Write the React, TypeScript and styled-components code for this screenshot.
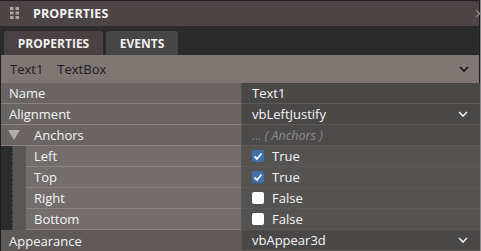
import React from "react";
import styled, { createGlobalStyle, css } from "styled-components";

const Global = createGlobalStyle`
  html, body { margin: 0; padding: 0; background: #1f1f1f; }
  body { font-family: "Open Sans", "Noto Sans", sans-serif; }
`;

const Panel = styled.div`
  width: 480px;
  height: 251px;
  background: #1f1f1f;
  border-right: 1px solid #8a8a8a;
  display: flex;
  flex-direction: column;
  overflow: hidden;
`;

const TitleBar = styled.div`
  margin-top: 1px;
  height: 25px;
  margin-right: 1px;
  background: #4d4545;
  display: flex;
  align-items: center;
  padding-left: 10px;
  gap: 13px;
  position: relative;
`;

const TitleText = styled.div`
  color: #f2f2f2;
  font-weight: 700;
  font-size: 12.5px;
  letter-spacing: 0.1px;
`;

const CloseIcon = styled.svg`
  position: absolute;
  right: -5px;
  top: 8px;
`;

const Grip = () => (
  <svg width="10" height="12" viewBox="0 0 10 12">
    {[0, 4.5, 9].map((y) =>
      [0, 5.5].map((x) => (
        <rect key={`${x}-${y}`} x={x} y={y} width="3.5" height="3" fill="#aca3a3" />
      ))
    )}
  </svg>
);

const TabStrip = styled.div`
  height: 30px;
  margin-right: 1px;
  background: #2b2b2b;
  display: flex;
  align-items: flex-end;
  padding-left: 4px;
  gap: 3px;
`;

const Tab = styled.div<{ $active?: boolean }>`
  height: 24px;
  border-radius: 3px 3px 0 0;
  display: flex;
  align-items: center;
  justify-content: center;
  color: #f0f0f0;
  font-weight: 700;
  font-size: 12px;
  background: ${(p) => (p.$active ? "#4a4242" : "#474747")};
  width: ${(p) => (p.$active ? "99px" : "72px")};
`;

const Selector = styled.div`
  height: 28px;
  margin-left: 1px;
  margin-right: 1px;
  background: #7f7774;
  display: flex;
  align-items: center;
  padding: 0 10px 0 9px;
  color: #1d1d1d;
  font-size: 13px;
  gap: 14px;
`;

const Spacer = styled.div`
  flex: 1;
`;

const Grid = styled.div`
  display: flex;
  flex-direction: column;
  margin-left: 1px;
`;

const Row = styled.div`
  display: grid;
  grid-template-columns: 240px 1fr;
  height: 21px;
`;

const NameCell = styled.div<{ $tone?: "base" | "child" | "dark" }>`
  display: flex;
  align-items: center;
  box-sizing: border-box;
  border-bottom: 1px solid #8a8381;
  color: #f4f4f4;
  font-size: 13px;
  padding-left: 8px;
  flex: 1;
  background: ${(p) =>
    p.$tone === "child" ? "#736d6b" : p.$tone === "dark" ? "#5f5a58" : "#6a6462"};
  ${(p) =>
    p.$tone === "dark" &&
    css`
      border-bottom: none;
    `}
`;

const ChildName = styled.div`
  display: flex;
  align-items: stretch;
  box-sizing: border-box;
`;

const Gutter = styled.div`
  width: 11px;
  background: #2c2c2c;
  border-right: 1px dashed #4a4f6e;
`;

const Band = styled.div`
  width: 13px;
  background: #5a5654;
`;

const GroupName = styled(NameCell)`
  padding-left: 7px;
  gap: 14px;
`;

const ValueCell = styled.div<{ $tone?: "base" | "child" | "muted" }>`
  display: flex;
  align-items: center;
  box-sizing: border-box;
  border-bottom: 1px solid #5c5959;
  border-left: 1px solid #5a5656;
  color: #f4f4f4;
  font-size: 13px;
  padding: 0 12px 0 10px;
  gap: 8px;
  background: ${(p) =>
    p.$tone === "child" ? "#555252" : p.$tone === "muted" ? "#4d4a4a" : "#4a4747"};
`;

const Muted = styled.span`
  color: #8d8a8a;
  font-style: italic;
  font-size: 12.5px;
`;

const Box = styled.span<{ $checked?: boolean }>`
  width: 12px;
  height: 12px;
  border-radius: 2px;
  display: inline-flex;
  align-items: center;
  justify-content: center;
  background: ${(p) => (p.$checked ? "#3f70ac" : "#ffffff")};
`;

const Chevron = ({ color = "#f0f0f0" }: { color?: string }) => (
  <svg width="10" height="6" viewBox="0 0 10 6">
    <path d="M1 1 L5 5 L9 1" fill="none" stroke={color} strokeWidth="1.6" />
  </svg>
);

const Check = () => (
  <svg width="10" height="9" viewBox="0 0 10 9">
    <path d="M1.5 4.5 L4 7 L8.5 1.5" fill="none" stroke="#fff" strokeWidth="1.8" />
  </svg>
);

const Triangle = () => (
  <svg width="12" height="10" viewBox="0 0 12 10">
    <path d="M0 0 H12 L6 10 Z" fill="#b3aeac" />
  </svg>
);

const ChildRow = ({ label, checked }: { label: string; checked: boolean }) => (
  <Row>
    <ChildName>
      <Gutter />
      <Band />
      <NameCell $tone="child">{label}</NameCell>
    </ChildName>
    <ValueCell $tone="child">
      <Box $checked={checked}>{checked && <Check />}</Box>
      {checked ? "True" : "False"}
    </ValueCell>
  </Row>
);

export default function App() {
  return (
    <>
      <Global />
      <Panel>
        <TitleBar>
          <Grip />
          <TitleText>PROPERTIES</TitleText>
          <CloseIcon width="9" height="9" viewBox="0 0 9 9">
            <path d="M1 1 L8 8 M8 1 L1 8" stroke="#8a8282" strokeWidth="1.4" />
          </CloseIcon>
        </TitleBar>
        <TabStrip>
          <Tab $active>PROPERTIES</Tab>
          <Tab>EVENTS</Tab>
        </TabStrip>
        <Selector>
          <span>Text1</span>
          <span>TextBox</span>
          <Spacer />
          <Chevron color="#111" />
        </Selector>
        <Grid>
          <Row>
            <NameCell>Name</NameCell>
            <ValueCell>Text1</ValueCell>
          </Row>
          <Row>
            <NameCell>Alignment</NameCell>
            <ValueCell>
              vbLeftJustify
              <Spacer />
              <Chevron />
            </ValueCell>
          </Row>
          <Row>
            <GroupName>
              <Triangle />
              <span>Anchors</span>
            </GroupName>
            <ValueCell $tone="muted">
              <Muted>... ( Anchors )</Muted>
            </ValueCell>
          </Row>
          <ChildRow label="Left" checked />
          <ChildRow label="Top" checked />
          <ChildRow label="Right" checked={false} />
          <ChildRow label="Bottom" checked={false} />
          <Row>
            <NameCell $tone="dark">Appearance</NameCell>
            <ValueCell>
              vbAppear3d
              <Spacer />
              <Chevron />
            </ValueCell>
          </Row>
        </Grid>
      </Panel>
    </>
  );
}
